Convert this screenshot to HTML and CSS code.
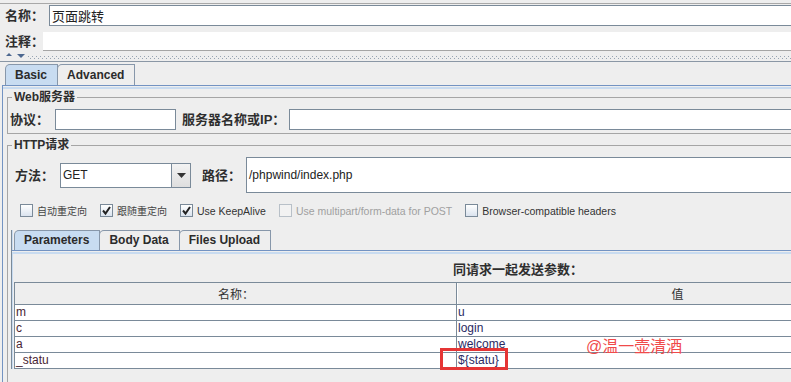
FILE: index.html
```html
<!DOCTYPE html>
<html lang="zh-CN">
<head>
    <meta charset="UTF-8">
    <meta name="viewport" content="width=device-width, initial-scale=1.0">
    <title>HTTP请求</title>
    <link rel="stylesheet" href="styles.css">
</head>
<body>
<div class="page">
    <div class="name-row">
        <span class="field-label">名称：</span>
        <div class="text-field name-field">页面跳转</div>
    </div>
    <div class="comment-row">
        <span class="field-label">注释：</span>
        <div class="comment-field"></div>
    </div>

    <!-- split pane divider -->
    <div class="divider">
        <svg class="divider-arrows" width="24" height="8" viewBox="0 0 24 8">
            <polygon points="2,4 5,1 8,4" fill="#4d6890"/>
            <polygon points="13,2 21,2 17,6" fill="#4d6890"/>
        </svg>
        <div class="dots"></div>
    </div>

    <div class="main-tabs">
        <div class="tab-strip">
            <div class="tab active">Basic</div>
            <div class="tab">Advanced</div>
        </div>
        <div class="tab-panel">
            <fieldset class="group web-group">
                <legend>Web服务器</legend>
                <div class="row">
                    <span class="field-label protocol-label">协议：</span>
                    <div class="text-field protocol-field"></div>
                    <span class="field-label server-label">服务器名称或IP：</span>
                    <div class="text-field server-field"></div>
                </div>
            </fieldset>

            <fieldset class="group http-group">
                <legend>HTTP请求</legend>
                <div class="row method-row">
                    <span class="field-label">方法：</span>
                    <div class="combo">
                        <span class="combo-value">GET</span>
                        <span class="combo-button">
                            <svg width="9" height="5" viewBox="0 0 9 5"><polygon points="0,0 9,0 4.5,5" fill="#333"/></svg>
                        </span>
                    </div>
                    <span class="field-label path-label">路径：</span>
                    <div class="text-field path-field">/phpwind/index.php</div>
                </div>
                <div class="options">
                    <span class="check"><span class="box"></span><span class="cn">自动重定向</span></span>
                    <span class="check"><span class="box"><svg width="11" height="11" viewBox="0 0 11 11"><path d="M2 5.5 L4.5 8.5 L9 2" fill="none" stroke="#222" stroke-width="2"/></svg></span><span class="cn">跟随重定向</span></span>
                    <span class="check"><span class="box"><svg width="11" height="11" viewBox="0 0 11 11"><path d="M2 5.5 L4.5 8.5 L9 2" fill="none" stroke="#222" stroke-width="2"/></svg></span>Use KeepAlive</span>
                    <span class="check disabled"><span class="box"></span>Use multipart/form-data for POST</span>
                    <span class="check"><span class="box"></span>Browser-compatible headers</span>
                </div>

                <div class="sub-tabs">
                    <div class="tab-strip sub-strip">
                        <div class="tab active">Parameters</div>
                        <div class="tab">Body Data</div>
                        <div class="tab">Files Upload</div>
                    </div>
                    <div class="sub-panel">
                        <div class="param-caption">同请求一起发送参数：</div>
                        <div class="param-table">
                            <div class="cell head">名称：</div>
                            <div class="cell head">值</div>
                            <div class="cell name">m</div>
                            <div class="cell value">u</div>
                            <div class="cell name">c</div>
                            <div class="cell value">login</div>
                            <div class="cell name">a</div>
                            <div class="cell value">welcome</div>
                            <div class="cell name">_statu</div>
                            <div class="cell value">${statu}</div>
                        </div>
                    </div>
                </div>
            </fieldset>
        </div>
    </div>

    <div class="mark-box"></div>
    <div class="watermark">@温一壶清酒</div>
</div>
</body>
</html>
```

FILE: styles.css
```css
body {
    margin: 0;
    background: #eeeeee;
    color: #2e2e2e;
    font-family: "Liberation Sans", Arial, "Noto Sans CJK SC", sans-serif;
    font-size: 12px;
    overflow: hidden;
}

.page {
    position: relative;
    width: 920px;
    height: 382px;
    overflow: hidden;
}

.field-label {
    font-family: "Liberation Sans", "Noto Sans CJK SC", sans-serif;
    font-size: 13px;
    font-weight: bold;
    line-height: 17px;
    white-space: nowrap;
}

.text-field {
    background: #fff;
    border: 1px solid #7a8a99;
    height: 19px;
    line-height: 19px;
    padding-left: 2px;
    box-sizing: content-box;
}

/* name / comment */
.name-row {
    display: flex;
    align-items: center;
    margin-top: 3px;
    border-top: 1px solid #a8a8a8;
    padding-top: 1px;
}

.name-row .field-label {
    width: 44px;
    padding-left: 5px;
}

.name-field {
    flex: 1;
    font-family: "Noto Sans CJK SC", sans-serif;
    font-size: 13px;
    color: #222;
}

.comment-row {
    display: flex;
    align-items: center;
    margin-top: 6px;
}

.comment-row .field-label {
    width: 38px;
    padding-left: 5px;
}

.comment-field {
    flex: 1;
    height: 18px;
    background: #fff;
    border-bottom: 1px solid #a5a5a5;
}

/* divider */
.divider {
    display: flex;
    height: 10px;
}

.divider-arrows {
    margin: 1px 0 0 4px;
}

.dots {
    flex: 1;
    background-image: linear-gradient(90deg, #97a4b2 1px, transparent 1px),
                      linear-gradient(90deg, #97a4b2 1px, transparent 1px);
    background-size: 4px 1px, 4px 1px;
    background-position: 0 5px, 2px 7px;
    background-repeat: repeat-x;
}

/* tabs */
.main-tabs {
    border-top: 1px solid #8a97a5;
}

.tab-strip {
    display: flex;
    padding: 2px 0 0 5px;
}

.tab {
    height: 20px;
    line-height: 20px;
    padding: 0 10px 0 9px;
    border: 1px solid #8797aa;
    border-bottom: none;
    border-top-left-radius: 5px;
    margin-right: -1px;
    font-weight: bold;
    color: #2b2b2b;
    background: #eeeeee;
}

.tab.active {
    background: #c8dcf1;
}

.tab-panel {
    margin-left: 2px;
    border-top: 1px solid #7393c2;
    border-left: 1px solid #7393c2;
    box-shadow: inset 0 1px 0 #eeeeee, inset 0 3px 0 #c8dbf0;
    padding-top: 3px;
}

/* groups */
.group {
    margin: 0 0 0 4px;
    padding: 4px 0 3px 2px;
    border: 1px solid #a5a5a5;
    min-width: 0;
}

.group legend {
    margin-left: 2px;
    padding: 0 2px;
    font-size: 12px;
    font-weight: bold;
    line-height: 16px;
    color: #2e2e2e;
}

.http-group {
    margin-top: 3px;
    padding-bottom: 40px;
}

.row {
    display: flex;
    align-items: center;
}

.protocol-label {
    margin-right: 6px;
}

.protocol-field {
    width: 117px;
}

.server-label {
    margin: 0 4px 0 6px;
}

.server-field {
    flex: 1;
}

.method-row {
    padding-left: 5px;
}

.combo {
    display: flex;
    width: 129px;
    height: 23px;
    margin-left: 6px;
    border: 1px solid #7a8a99;
    background: #fff;
}

.combo-value {
    flex: 1;
    padding-left: 2px;
    line-height: 23px;
    color: #222;
}

.combo-button {
    width: 18px;
    border-left: 1px solid #7a8a99;
    background: linear-gradient(#f3f3f3, #dedede);
    display: flex;
    align-items: center;
    justify-content: center;
}

.path-label {
    margin: 0 5px 0 11px;
}

.path-field {
    flex: 1;
    height: 34px;
    line-height: 34px;
    color: #222;
}

.options {
    display: flex;
    align-items: center;
    margin-top: 11px;
    padding-left: 10px;
    height: 13px;
    font-size: 10.5px;
    color: #333;
}

.check {
    display: flex;
    align-items: center;
    margin-right: 13px;
    white-space: nowrap;
}

.check .cn {
    font-family: "Noto Sans CJK SC", sans-serif;
    font-size: 10px;
    color: #444;
}

.box {
    width: 11px;
    height: 11px;
    margin-right: 4px;
    border: 1px solid #7a8a99;
    background: linear-gradient(#ffffff, #dae3ee);
    display: flex;
    align-items: center;
    justify-content: center;
}

.check.disabled {
    color: #a0a0a0;
}

.check.disabled .box {
    border-color: #b8c0c8;
    background: #f2f2f2;
}

/* parameters */
.sub-tabs {
    margin: 13px 0 0 1px;
    border-left: 1px solid #7a8a99;
    box-shadow: inset 1px 0 0 #c8dbf0;
}

.sub-strip {
    padding: 0 0 0 2px;
}

.sub-strip .tab {
    height: 19px;
    line-height: 19px;
}

.sub-panel {
    border-top: 1px solid #7393c2;
    box-shadow: inset 0 1px 0 #eeeeee, inset 0 3px 0 #c8dbf0, inset 1px 0 0 #c8dbf0;
    padding-left: 2px;
}

.param-caption {
    padding: 4px 0 0 439px;
    height: 27px;
    line-height: 27px;
    font-family: "Noto Sans CJK SC", sans-serif;
    font-size: 13px;
    font-weight: bold;
    color: #2e2e2e;
}

.param-table {
    display: grid;
    grid-template-columns: 441px 441px;
    border-top: 1px solid #7a8a99;
    border-left: 1px solid #7a8a99;
}

.cell {
    height: 15px;
    line-height: 15px;
    border-bottom: 1px solid #7a8a99;
    padding-left: 1px;
    background: #fff;
    white-space: nowrap;
}

.cell:nth-child(2n) {
    border-left: 1px solid #7a8a99;
}

.cell.head {
    height: 21px;
    line-height: 21px;
    background: #eeeeee;
    text-align: center;
    font-family: "Noto Sans CJK SC", sans-serif;
    color: #333;
}

.cell.head:nth-child(2) {
    box-shadow: inset 1px 0 0 #fff;
}

.cell.name {
    color: #4a1f33;
}

.cell.value {
    color: #2a2a63;
}

/* screenshot annotations */
.mark-box {
    position: absolute;
    left: 440px;
    top: 348px;
    width: 68px;
    height: 22px;
    box-sizing: border-box;
    border: 3px solid #e53535;
}

.watermark {
    position: absolute;
    left: 586px;
    top: 337px;
    font-family: "Liberation Sans", "Noto Sans CJK SC", sans-serif;
    font-size: 16px;
    line-height: 20px;
    color: #f04a4a;
}
```
